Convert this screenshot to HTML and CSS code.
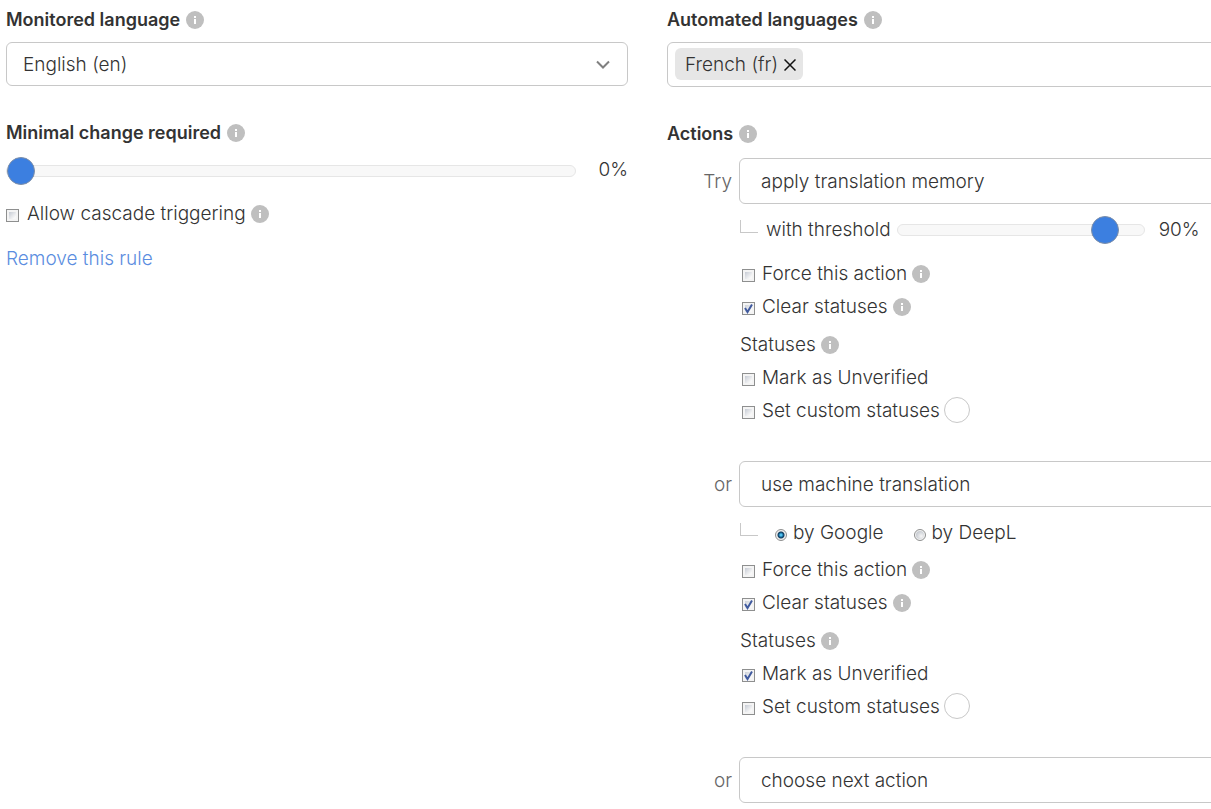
FILE: index.html
```html
<!DOCTYPE html>
<html lang="en">
<head>
<meta charset="utf-8">
<meta name="viewport" content="width=device-width, initial-scale=1">
<title>Automation rule</title>
<link rel="stylesheet" href="styles.css">
</head>
<body>
<svg class="sprite">
  <symbol id="info" viewBox="0 0 18 18">
    <circle cx="9" cy="9" r="9" fill="#bfbfbf"/>
    <path d="M8 5h2v2H8zM8 8h2v5H8z" fill="#fff"/>
  </symbol>
</svg>
<main class="rule">
  <section class="column">
    <div class="heading"><label for="source">Monitored language</label><svg class="info"><use href="#info"/></svg></div>
    <div class="picker">
      <select id="source" class="select"><option>English (en)</option></select>
      <svg class="chevron" viewBox="0 0 14 9"><path d="M1 1.5l6 6 6-6" fill="none" stroke="#808080" stroke-width="2"/></svg>
    </div>
    <div class="heading heading-next"><label for="change">Minimal change required</label><svg class="info"><use href="#info"/></svg></div>
    <div class="slider-row">
      <input id="change" class="slider" type="range" min="0" max="100" value="0">
      <output class="percent" for="change">0%</output>
    </div>
    <div class="row row-cascade"><input id="cascade" class="check" type="checkbox"><label for="cascade">Allow cascade triggering</label><svg class="info"><use href="#info"/></svg></div>
    <a class="remove" href="#">Remove this rule</a>
  </section>

  <section class="column">
    <div class="heading"><span>Automated languages</span><svg class="info"><use href="#info"/></svg></div>
    <div class="tags">
      <span class="tag">French (fr)
        <button class="tag-remove" type="button" aria-label="Remove French"><svg viewBox="0 0 12 12"><path d="M.5.5l11 11M11.5.5l-11 11" stroke="#111" stroke-width="1.5"/></svg></button>
      </span>
    </div>
    <div class="heading heading-next"><span>Actions</span><svg class="info"><use href="#info"/></svg></div>

    <div class="actions">
      <div class="action">
        <label class="lead" for="action1">Try</label>
        <select id="action1" class="select select-action"><option>apply translation memory</option></select>
        <div class="details">
          <div class="option option-threshold">
            <span class="branch"></span>
            <label for="threshold">with threshold</label>
            <input id="threshold" class="slider slider-short" type="range" min="10" max="100" value="90">
            <output class="threshold-value" for="threshold">90%</output>
          </div>
          <div class="row"><input id="force1" class="check" type="checkbox"><label for="force1">Force this action</label><svg class="info"><use href="#info"/></svg></div>
          <div class="row"><input id="clear1" class="check" type="checkbox" checked><label for="clear1">Clear statuses</label><svg class="info"><use href="#info"/></svg></div>
          <div class="row row-title"><span>Statuses</span><svg class="info"><use href="#info"/></svg></div>
          <div class="row"><input id="mark1" class="check" type="checkbox"><label for="mark1">Mark as Unverified</label></div>
          <div class="row"><input id="custom1" class="check" type="checkbox"><label for="custom1">Set custom statuses</label><button class="status" type="button" aria-label="Choose status"></button></div>
        </div>
      </div>

      <div class="action">
        <label class="lead" for="action2">or</label>
        <select id="action2" class="select select-action"><option>use machine translation</option></select>
        <div class="details">
          <div class="option">
            <span class="branch"></span>
            <div class="engines">
              <div class="engine"><input id="google" class="radio" type="radio" name="engine" checked><label for="google">by Google</label></div>
              <div class="engine"><input id="deepl" class="radio" type="radio" name="engine"><label for="deepl">by DeepL</label></div>
            </div>
          </div>
          <div class="row"><input id="force2" class="check" type="checkbox"><label for="force2">Force this action</label><svg class="info"><use href="#info"/></svg></div>
          <div class="row"><input id="clear2" class="check" type="checkbox" checked><label for="clear2">Clear statuses</label><svg class="info"><use href="#info"/></svg></div>
          <div class="row row-title"><span>Statuses</span><svg class="info"><use href="#info"/></svg></div>
          <div class="row"><input id="mark2" class="check" type="checkbox" checked><label for="mark2">Mark as Unverified</label></div>
          <div class="row"><input id="custom2" class="check" type="checkbox"><label for="custom2">Set custom statuses</label><button class="status" type="button" aria-label="Choose status"></button></div>
        </div>
      </div>

      <div class="action">
        <label class="lead" for="action3">or</label>
        <select id="action3" class="select select-action"><option>choose next action</option></select>
      </div>
    </div>
  </section>
</main>
</body>
</html>
```
FILE: styles.css
```css
* { box-sizing: border-box; }

body {
  margin: 0;
  background: #fff;
  color: #333;
  font: 300 19px/24px Inter, "Open Sans", sans-serif;
  overflow-x: hidden;
}

button, select, input { margin: 0; font: inherit; color: inherit; }

.sprite { display: none; }

/* The two columns run past the right edge of the window. */
.rule {
  display: grid;
  grid-template-columns: 1fr 1fr;
  gap: 39px;
  margin-right: -78px;
  padding: 8px 0 6px 6px;
}

.column { min-width: 0; }

.heading {
  display: flex;
  align-items: center;
  gap: 6px;
  margin-bottom: 10px;
  font-size: 18px;
  font-weight: 600;
}

.heading-next { margin: 35px 0 12px; }

.info { flex: none; width: 18px; height: 18px; }

.picker { display: grid; align-items: center; }
.picker > * { grid-area: 1 / 1; }

.select {
  appearance: none;
  width: 100%;
  height: 44px;
  padding: 1px 16px 0;
  border: 1px solid #c8c8c8;
  border-radius: 6px;
  background: #fff;
}

.select-action { height: 46px; padding: 1px 21px 0; }

.chevron {
  justify-self: end;
  width: 14px;
  height: 9px;
  margin-right: 18px;
  pointer-events: none;
}

.slider-row { display: flex; align-items: center; gap: 16px; }
.percent { width: 36px; margin-bottom: 3px; text-align: right; }

.slider {
  appearance: none;
  flex: 1;
  min-width: 0;
  height: 28px;
  background: transparent;
}

.slider::-webkit-slider-runnable-track {
  height: 12px;
  border: 1px solid #e6e6e6;
  border-radius: 6px;
  background: #f8f8f8;
}

.slider::-webkit-slider-thumb {
  appearance: none;
  width: 28px;
  height: 28px;
  margin-top: -9px;
  border: 1px solid #7d8ea8;
  border-radius: 50%;
  background: #3c7fe0;
}

.row { display: flex; align-items: center; height: 33px; }
.row .info { margin-left: 5px; }
.row-cascade { margin-top: 12px; }
.row-cascade .check { margin-left: 0; margin-right: 8px; }
.row-title { height: 32px; margin-top: 6px; }

.check {
  appearance: none;
  flex: none;
  width: 13px;
  height: 13px;
  margin: 4px 7px 0 2px;
  border: 1px solid #8e8f8f;
  background: linear-gradient(135deg, #c6cbd4, #f8f8f8 80%) content-box, #f4f4f4;
  padding: 2px;
}

.check:checked {
  background: url("data:image/svg+xml,%3Csvg xmlns='http://www.w3.org/2000/svg' viewBox='0 0 11 11'%3E%3Cpath d='M2 5l2.5 4L9 1.5' fill='none' stroke='%23405a9e' stroke-width='2'/%3E%3C/svg%3E") border-box center / 11px no-repeat, linear-gradient(135deg, #cbd0d8, #f8f8f8 80%) content-box, #f4f4f4;
}

.radio {
  appearance: none;
  flex: none;
  width: 12px;
  height: 12px;
  margin: 4px 6px 0 0;
  border: 1px solid #8e8f8f;
  border-radius: 50%;
  background: radial-gradient(circle at 65% 65%, #f6f6f6, #c8ccd2 70%) content-box, #f4f4f4;
  padding: 1px;
}

.radio:checked {
  background: radial-gradient(circle, #52c2ee 0 1px, #176a9c 2px, #123b5c 3px, #eee 4px);
}

.remove {
  display: inline-block;
  margin-top: 17px;
  color: #5b8de0;
  text-decoration: none;
}

.tags {
  display: flex;
  height: 45px;
  padding: 5px 7px;
  border: 1px solid #c8c8c8;
  border-radius: 6px;
}

.tag {
  display: flex;
  align-items: center;
  gap: 6px;
  height: 32px;
  padding: 1px 7px 0 10px;
  border-radius: 6px;
  background: #e6e6e6;
}

.tag-remove { display: flex; padding: 0; border: 0; background: none; }
.tag-remove svg { width: 12px; height: 12px; }

.actions { display: grid; gap: 34px; }

.action {
  display: grid;
  grid-template-columns: 65px 1fr;
  column-gap: 7px;
  align-items: center;
}

.lead { padding-top: 2px; color: #666; text-align: right; }
.details { grid-column: 2; padding-left: 1px; }

.option { display: flex; align-items: center; height: 46px; padding: 10px 0 4px; }
.option-threshold { height: 53px; padding-bottom: 11px; }

.branch {
  flex: none;
  width: 18px;
  height: 13px;
  margin: 0 8px 8px 0;
  border: solid #c8c8c8;
  border-width: 0 0 1px 1px;
}

.slider-short { flex: none; width: 248px; margin: 0 14px 0 6px; }

.engines { display: flex; gap: 30px; padding-left: 9px; }
.engine { display: flex; align-items: center; }

.status {
  width: 26px;
  height: 26px;
  margin: 0 0 2px 4px;
  padding: 0;
  border: 1px solid #c8c8c8;
  border-radius: 50%;
  background: #fff;
}
```
